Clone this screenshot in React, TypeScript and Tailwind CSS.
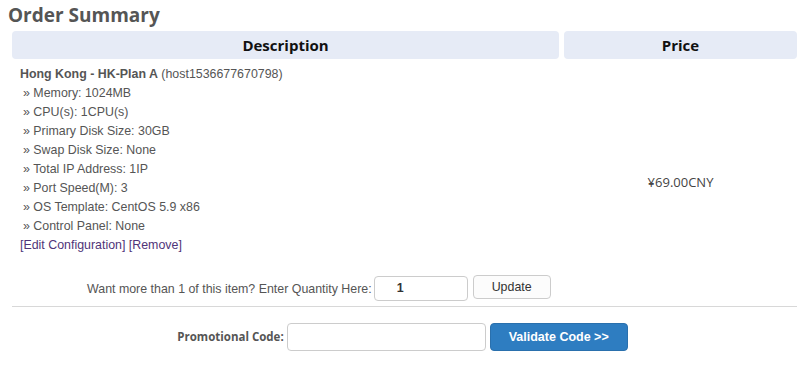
import React from 'react';

const options = [
  'Memory: 1024MB',
  'CPU(s): 1CPU(s)',
  'Primary Disk Size: 30GB',
  'Swap Disk Size: None',
  'Total IP Address: 1IP',
  'Port Speed(M): 3',
  'OS Template: CentOS 5.9 x86',
  'Control Panel: None',
];

export default function App() {
  return (
    <div className="w-[803px] h-[365px] overflow-hidden bg-white text-[#555] font-['Liberation_Sans',Arial,sans-serif]">
      <h1 className="pl-2 pt-[2px] text-[19px] leading-[26px] font-bold font-['Open_Sans',sans-serif] text-[#555]">
        Order Summary
      </h1>

      <div className="ml-3 mr-[6px] mt-[3px]">
        {/* Header */}
        <div className="grid grid-cols-[547px_233px] gap-x-[5px]">
          <div className="h-[28px] rounded-[4px] bg-[#e6ebf6] flex items-center justify-center text-[15px] font-bold text-[#111] font-['Open_Sans',sans-serif]">
            Description
          </div>
          <div className="h-[28px] rounded-[4px] bg-[#e6ebf6] flex items-center justify-center text-[15px] font-bold text-[#111] font-['Open_Sans',sans-serif]">
            Price
          </div>
        </div>

        {/* Item row */}
        <div className="grid grid-cols-[547px_233px] gap-x-[5px] border-b border-[#d8d8d8]">
          <div className="pt-[6px] pb-[5px] text-[12.4px] leading-[19px]">
            <div className="pl-2">
              <span className="font-bold">Hong Kong - HK-Plan A</span> (host1536677670798)
            </div>
            {options.map((o) => (
              <div key={o} className="pl-[11px]">
                » {o}
              </div>
            ))}
            <div className="pl-2 text-[#4f3479]">
              [Edit Configuration] [Remove]
            </div>
            <div className="flex items-start pl-[75px] mt-[25px]">
              <span>Want more than 1 of this item? Enter Quantity Here:</span>
              <div className="ml-[2px] -mt-[4px] w-[94px] h-[25px] border border-[#ccc] rounded-[4px] flex items-center pl-[22px] font-bold text-[#333]">
                1
              </div>
              <button className="ml-[5px] -mt-[5px] w-[78px] h-[24px] border border-[#ccc] rounded-[4px] bg-[#fcfcfc] text-[#333]">
                Update
              </button>
            </div>
          </div>
          <div className="flex items-center justify-center text-[13px] font-medium text-[#444] font-['Open_Sans',sans-serif]">
            ¥69.00CNY
          </div>
        </div>
      </div>

      {/* Promo row */}
      <div className="flex items-center justify-center mt-[16px] pl-[2px]">
        <span className="text-[11.5px] font-bold text-[#555] font-['Open_Sans',sans-serif]">Promotional Code:</span>
        <div className="ml-[3px] w-[199px] h-[28px] border border-[#ccc] rounded-[4px] bg-white" />
        <button className="ml-[4px] w-[138px] h-[28px] rounded-[4px] bg-[#2e7dc1] border border-[#2a70ad] text-white text-[12.5px] font-bold">
          Validate Code &gt;&gt;
        </button>
      </div>
    </div>
  );
}
